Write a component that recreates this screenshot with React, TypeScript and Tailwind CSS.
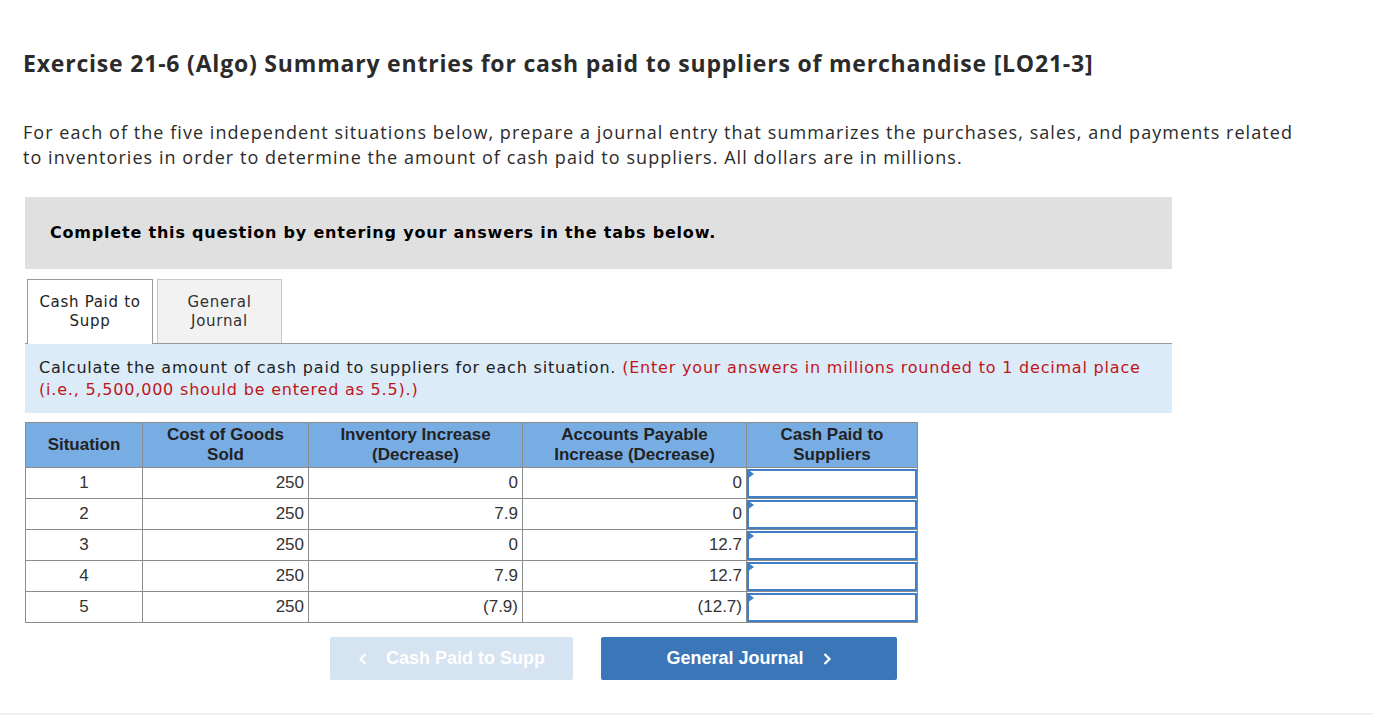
const rows = [
  { n: 1, cogs: "250", inv: "0", ap: "0" },
  { n: 2, cogs: "250", inv: "7.9", ap: "0" },
  { n: 3, cogs: "250", inv: "0", ap: "12.7" },
  { n: 4, cogs: "250", inv: "7.9", ap: "12.7" },
  { n: 5, cogs: "250", inv: "(7.9)", ap: "(12.7)" },
];

const sans = "font-['Open_Sans','Lato',sans-serif]";
const verdana = "font-['DejaVu_Sans','Verdana',sans-serif]";
const arial = "font-['Liberation_Sans','Arial',sans-serif]";

function AnswerCell() {
  return (
    <td className="relative border border-[#8c8c8c] p-0">
      <div className="h-[29px] border-2 border-[#3f7fc6] bg-white" />
      <span className="absolute left-0 top-[1px] h-0 w-0 border-y-[5px] border-l-[7px] border-y-transparent border-l-[#3f7fc6]" />
    </td>
  );
}

export default function App() {
  return (
    <div className="min-h-[715px] bg-white text-[#222] flex flex-col">
      <div className="flex-1 px-[23px] pt-[48px]">
        <h1 className={`${sans} text-[23px] font-bold leading-[30px] tracking-[0.8px] text-[#2b2b2b]`}>
          Exercise 21-6 (Algo) Summary entries for cash paid to suppliers of merchandise [LO21-3]
        </h1>
        <p className={`${sans} mt-[42px] max-w-[1280px] text-[18px] leading-[25px] tracking-[1.05px] text-[#2b2b2b]`}>
          For each of the five independent situations below, prepare a journal entry that summarizes the purchases, sales, and payments related to inventories in order to determine the amount of cash paid to suppliers. All dollars are in millions.
        </p>

        <div className="ml-[2px] mt-[27px] w-[1147px]">
          <div className={`${verdana} flex h-[72px] items-center bg-[#e0e0e0] pl-[25px] text-[16px] font-bold tracking-[0.8px] text-black`}>
            Complete this question by entering your answers in the tabs below.
          </div>

          <div className={`${verdana} mt-[10px] flex items-end gap-[4px] border-b border-[#9a9a9a] pl-[2px] text-[15px] leading-[19px] tracking-[0.7px]`}>
            <div className="-mb-px flex h-[65px] w-[126px] items-center justify-center border border-b-0 border-[#9a9a9a] bg-white text-center text-[#222]">
              Cash Paid to<br />Supp
            </div>
            <div className="flex h-[64px] w-[125px] items-center justify-center border border-b-0 border-[#c8c8c8] bg-[#f2f2f2] text-center text-[#333]">
              General<br />Journal
            </div>
          </div>

          <div className={`${verdana} bg-[#dcebf8] px-[14px] pb-[12px] pt-[13px] text-[16px] leading-[22px] tracking-[0.8px] text-[#222]`}>
            Calculate the amount of cash paid to suppliers for each situation.{" "}
            <span className="text-[#c0161b]">
              (Enter your answers in millions rounded to 1 decimal place (i.e., 5,500,000 should be entered as 5.5).)
            </span>
          </div>
        </div>

        <table className={`${arial} ml-[2px] mt-[9px] border-collapse text-[17px] text-[#333]`}>
          <thead>
            <tr className="h-[45px] bg-[#78ade4] font-bold leading-[20px] text-[#222]">
              <th className="w-[117px] border border-[#8c8c8c] font-bold">Situation</th>
              <th className="w-[166px] border border-[#8c8c8c] font-bold">Cost of Goods<br />Sold</th>
              <th className="w-[214px] border border-[#8c8c8c] font-bold">Inventory Increase<br />(Decrease)</th>
              <th className="w-[224px] border border-[#8c8c8c] font-bold">Accounts Payable<br />Increase (Decrease)</th>
              <th className="w-[171px] border border-[#8c8c8c] font-bold">Cash Paid to<br />Suppliers</th>
            </tr>
          </thead>
          <tbody>
            {rows.map((r) => (
              <tr key={r.n} className="h-[31px]">
                <td className="border border-[#8c8c8c] text-center">{r.n}</td>
                <td className="border border-[#8c8c8c] pr-[4px] text-right">{r.cogs}</td>
                <td className="border border-[#8c8c8c] pr-[4px] text-right">{r.inv}</td>
                <td className="border border-[#8c8c8c] pr-[4px] text-right">{r.ap}</td>
                <AnswerCell />
              </tr>
            ))}
          </tbody>
        </table>

        <div className={`${arial} mt-[14px] flex gap-[28px] pl-[307px]`}>
          <button className="flex h-[43px] w-[243px] items-center justify-center gap-[18px] rounded-[2px] bg-[#d6e3f1] text-[18px] font-bold text-white">
            <svg width="10" height="14" viewBox="0 0 10 14" fill="none" stroke="white" strokeWidth="2.2">
              <path d="M7.5 2 L2.5 7 L7.5 12" />
            </svg>
            Cash Paid to Supp
          </button>
          <button className="flex h-[43px] w-[296px] items-center justify-center gap-[18px] rounded-[2px] bg-[#3b76b8] text-[18px] font-bold text-white">
            General Journal
            <svg width="10" height="14" viewBox="0 0 10 14" fill="none" stroke="white" strokeWidth="2.2">
              <path d="M2.5 2 L7.5 7 L2.5 12" />
            </svg>
          </button>
        </div>
      </div>
      <div className="h-[2px] bg-[#f0f0f0]" />
    </div>
  );
}
